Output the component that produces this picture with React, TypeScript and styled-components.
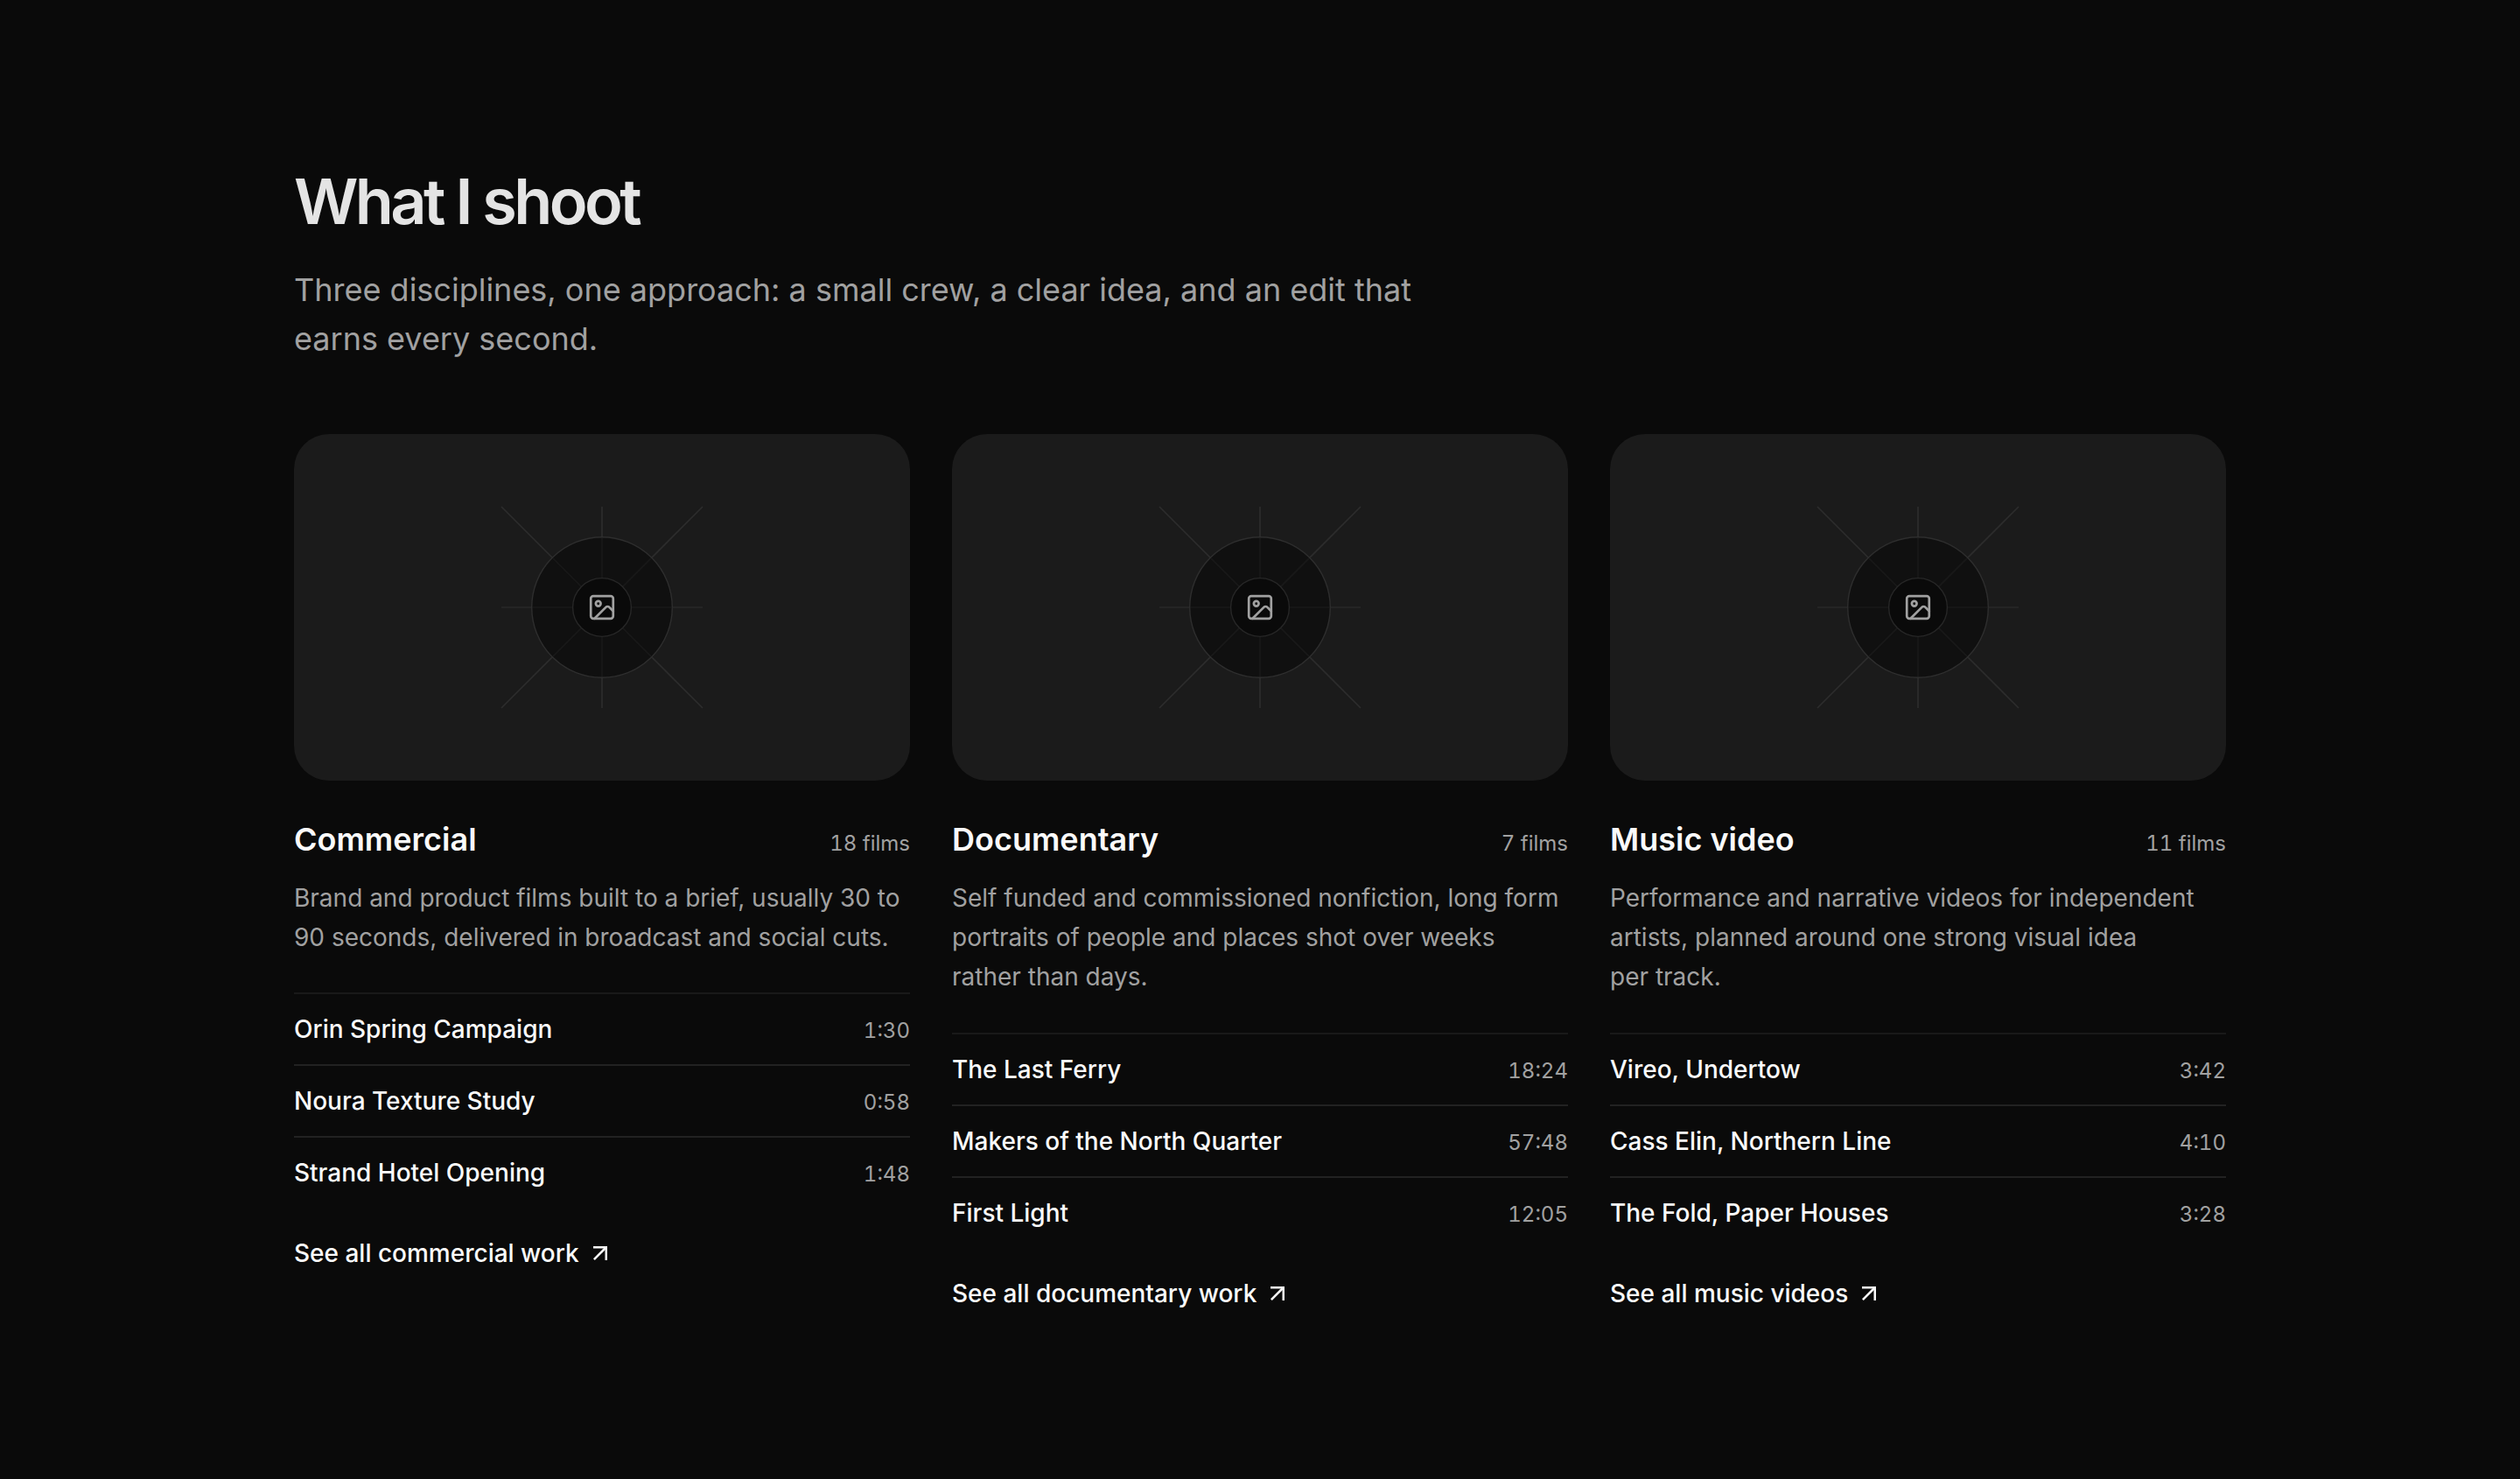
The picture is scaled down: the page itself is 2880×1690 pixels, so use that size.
import React from "react";
import styled, { createGlobalStyle } from "styled-components";

const GlobalStyle = createGlobalStyle`
  *, *::before, *::after { box-sizing: border-box; }
  body { margin: 0; background: #0a0a0a; }
  h2, h3, p, ul { margin: 0; padding: 0; }
`;

const Section = styled.section`
  min-height: 1690px;
  padding: 192px 336px 190px;
  background: #0a0a0a;
  color: #fafafa;
  font-family: Inter, "Liberation Sans", sans-serif;
`;

const Header = styled.header`
  display: flex;
  flex-direction: column;
  gap: 32px;
  max-width: 1344px;
`;

const Title = styled.h2`
  height: 79px;
  font-size: 72px;
  line-height: 76px;
  font-weight: 600;
  letter-spacing: -0.05em;
  opacity: 0.91;
`;

const Lead = styled.p`
  font-size: 36px;
  line-height: 56px;
  color: #a1a1a1;
`;

const Grid = styled.div`
  display: grid;
  grid-template-columns: repeat(3, 1fr);
  gap: 48px;
  margin-top: 81px;
`;

const Column = styled.article`
  display: flex;
  flex-direction: column;
  align-items: stretch;
`;

const Cover = styled.div`
  display: flex;
  align-items: center;
  justify-content: center;
  aspect-ratio: 16 / 9;
  border-radius: 40px;
  background: #1b1b1b;
`;

const Heading = styled.div`
  display: flex;
  align-items: baseline;
  justify-content: space-between;
  margin-top: 39px;
`;

const Name = styled.h3`
  font-size: 36px;
  line-height: 56px;
  font-weight: 600;
`;

const Count = styled.span`
  font-size: 24px;
  line-height: 32px;
  color: #a1a1a1;
  font-variant-numeric: tabular-nums;
`;

const Description = styled.p`
  margin-top: 16.6px;
  font-size: 28px;
  line-height: 45.3px;
  color: #a1a1a1;
`;

const Films = styled.ul`
  margin-top: 40.2px;
  list-style: none;
  border-top: 2px solid #191919;
`;

const Film = styled.li`
  display: flex;
  align-items: baseline;
  justify-content: space-between;
  padding: 20px 0;
  font-size: 28px;
  line-height: 40px;
  font-weight: 500;

  & + & {
    border-top: 2px solid #222222;
  }
`;

const Duration = styled.span`
  font-size: 24px;
  line-height: 32px;
  font-weight: 400;
  color: #a1a1a1;
  font-variant-numeric: tabular-nums;
`;

const More = styled.a`
  display: inline-flex;
  align-items: center;
  align-self: flex-start;
  gap: 8px;
  margin-top: 32px;
  font-size: 28px;
  line-height: 40px;
  font-weight: 500;
  color: inherit;
  text-decoration: none;
`;

const Aperture = () => (
  <svg width="240" height="240" viewBox="-120 -120 240 240" fill="none">
    <path
      d="M0-115V115M-115-115 115 115M115-115-115 115"
      stroke="#2c2c2c"
      strokeWidth="1.7"
    />
    <path d="M-115 0H115" stroke="#292929" strokeWidth="1.5" />
    <circle r="80.3" fill="#0a0a0a" fillOpacity="0.66" stroke="#2e2e2e" strokeWidth="1.4" />
    <path
      d="M0-79V79M-79 0H79M-56-56 56 56M56-56-56 56"
      stroke="#1a1a1a"
      strokeOpacity="0.6"
      strokeWidth="1.5"
    />
    <circle r="33.4" fill="#0a0a0a" stroke="#272727" strokeWidth="1.4" />
    <g
      transform="scale(1.42) translate(-12 -12)"
      stroke="#a1a1a1"
      strokeWidth="1.9"
      strokeLinecap="round"
      strokeLinejoin="round"
    >
      <rect width="18" height="18" x="3" y="3" rx="2" />
      <circle cx="9" cy="9" r="2" />
      <path d="m21 15-3.086-3.086a2 2 0 0 0-2.828 0L6 21" />
    </g>
  </svg>
);

const ArrowOut = () => (
  <svg width="32" height="32" viewBox="0 0 32 32" fill="none" stroke="currentColor" strokeWidth="2.5">
    <path d="M8 9.25H22.75V24" />
    <path d="M22.75 9.25 8.9 23.1" />
  </svg>
);

const disciplines = [
  {
    name: "Commercial",
    count: "18 films",
    description:
      "Brand and product films built to a brief, usually 30 to 90 seconds, delivered in broadcast and social cuts.",
    films: [
      ["Orin Spring Campaign", "1:30"],
      ["Noura Texture Study", "0:58"],
      ["Strand Hotel Opening", "1:48"],
    ],
    more: "See all commercial work",
  },
  {
    name: "Documentary",
    count: "7 films",
    description:
      "Self funded and commissioned nonfiction, long form portraits of people and places shot over weeks rather than days.",
    films: [
      ["The Last Ferry", "18:24"],
      ["Makers of the North Quarter", "57:48"],
      ["First Light", "12:05"],
    ],
    more: "See all documentary work",
  },
  {
    name: "Music video",
    count: "11 films",
    description:
      "Performance and narrative videos for independent artists, planned around one strong visual idea per\u00a0track.",
    films: [
      ["Vireo, Undertow", "3:42"],
      ["Cass Elin, Northern Line", "4:10"],
      ["The Fold, Paper Houses", "3:28"],
    ],
    more: "See all music videos",
  },
];

export default function App() {
  return (
    <>
      <GlobalStyle />
      <Section>
        <Header>
          <Title>What I shoot</Title>
          <Lead>
            Three disciplines, one approach: a small crew, a clear idea, and an edit that earns
            every second.
          </Lead>
        </Header>
        <Grid>
          {disciplines.map((d) => (
            <Column key={d.name}>
              <Cover>
                <Aperture />
              </Cover>
              <Heading>
                <Name>{d.name}</Name>
                <Count>{d.count}</Count>
              </Heading>
              <Description>{d.description}</Description>
              <Films>
                {d.films.map(([title, time]) => (
                  <Film key={title}>
                    {title}
                    <Duration>{time}</Duration>
                  </Film>
                ))}
              </Films>
              <More>
                {d.more}
                <ArrowOut />
              </More>
            </Column>
          ))}
        </Grid>
      </Section>
    </>
  );
}
